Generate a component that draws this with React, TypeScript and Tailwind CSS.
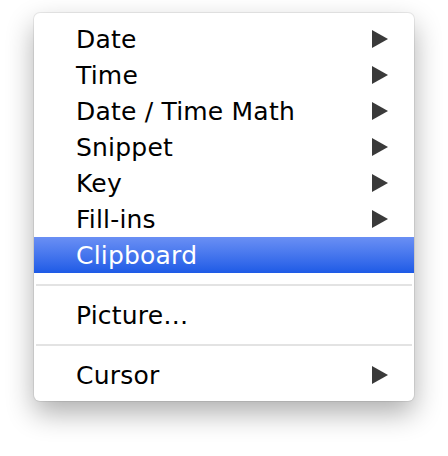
const items: { label: string; sub?: boolean; active?: boolean; sep?: boolean }[] = [
  { label: 'Date', sub: true },
  { label: 'Time', sub: true },
  { label: 'Date / Time Math', sub: true },
  { label: 'Snippet', sub: true },
  { label: 'Key', sub: true },
  { label: 'Fill-ins', sub: true },
  { label: 'Clipboard', active: true },
  { label: '', sep: true },
  { label: 'Picture…' },
  { label: '', sep: true },
  { label: 'Cursor', sub: true },
];

function Arrow({ color }: { color: string }) {
  return (
    <svg width="16" height="18" viewBox="0 0 16 18" className="shrink-0">
      <path d="M0 0 L16 9 L0 18 Z" fill={color} />
    </svg>
  );
}

export default function App() {
  return (
    <div className="w-[448px] h-[456px] bg-white pt-[13px] pl-[34px]">
      <div
        className="w-[380px] rounded-[6px] bg-white pt-[8px] pb-[8px] shadow-[0_12px_28px_rgba(0,0,0,0.32),0_0_0_1px_rgba(0,0,0,0.07)]"
        style={{ fontFamily: '"DejaVu Sans", Verdana, sans-serif' }}
      >
        {items.map((it, i) =>
          it.sep ? (
            <div key={i} className="h-[24px] flex items-center px-[2px]">
              <div className="h-[2px] w-full bg-[#e3e3e3]" />
            </div>
          ) : (
            <div
              key={i}
              className={`h-[36px] flex items-center justify-between pl-[42px] pr-[26px] text-[25px] leading-none ${
                it.active ? 'bg-gradient-to-b from-[#6a8ff4] to-[#1d5ae6] text-white' : 'text-black'
              }`}
            >
              <span className="tracking-[0.2px]">{it.label}</span>
              {it.sub && <Arrow color={it.active ? '#ffffff' : '#3a3a3a'} />}
            </div>
          )
        )}
      </div>
    </div>
  );
}
